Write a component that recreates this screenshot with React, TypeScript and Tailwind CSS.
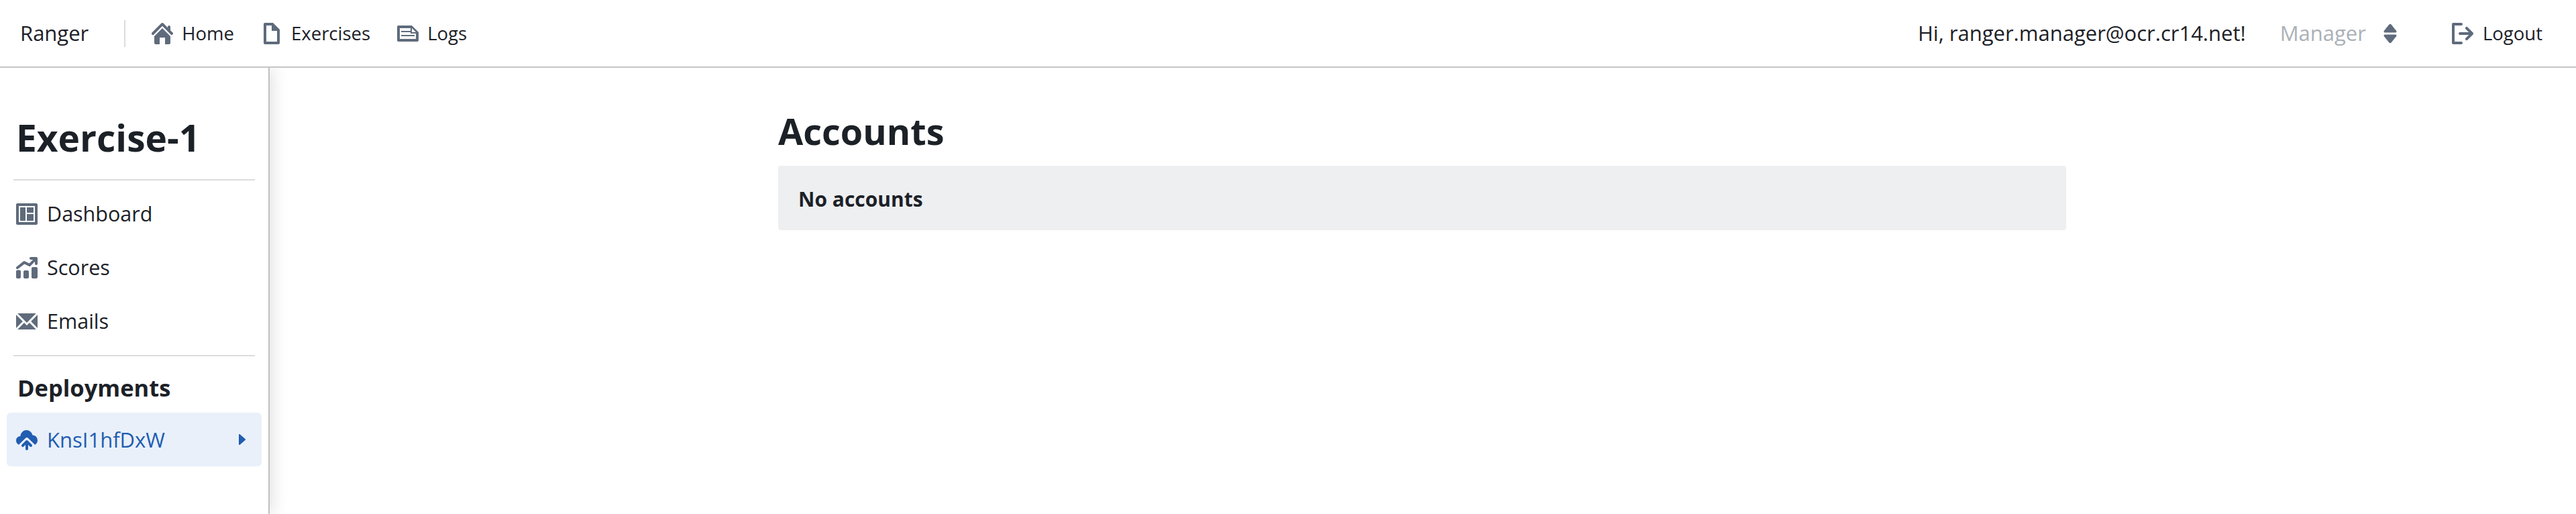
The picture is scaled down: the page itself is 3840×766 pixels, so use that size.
const home = "M2 10v5c0 .55.45 1 1 1h3v-5h4v5h3c.55 0 1-.45 1-1v-5L8 4l-6 6zM15.71 7.29L14 5.59V3c0-.55-.45-1-1-1s-1 .45-1 1v.59L8.71.29C8.53.11 8.28 0 8 0s-.53.11-.71.29l-7 7a1.003 1.003 0 001.42 1.42L8 2.41l6.29 6.29c.18.19.43.3.71.3a1.003 1.003 0 00.71-1.71z";
const doc = "M9 0H3c-.55 0-1 .45-1 1v14c0 .55.45 1 1 1h10c.55 0 1-.45 1-1V5L9 0zm3 14H4V2h4v4h4v8z";
const label = "M11 2H1c-.55 0-1 .45-1 1v10c0 .55.45 1 1 1h14c.55 0 1-.45 1-1V7l-5-5zm3 10H2V4h8v2H3v1h7v1h4v4zm-3-5V4l3 3h-3zM3 9h10v1H3z";
const logout = "M7 14H2V2h5c.55 0 1-.45 1-1s-.45-1-1-1H1C.45 0 0 .45 0 1v14c0 .55.45 1 1 1h6c.55 0 1-.45 1-1s-.45-1-1-1zm8.71-6.71l-4-4a1.003 1.003 0 00-1.42 1.42L12.59 7H6c-.55 0-1 .45-1 1s.45 1 1 1h6.59l-2.29 2.29a1.003 1.003 0 001.42 1.42l4-4c.18-.18.29-.43.29-.71 0-.28-.11-.53-.29-.71z";
const dbl = "M4 7.2h8c.6 0 1-.7.6-1.2L8.8 1.3a1 1 0 00-1.6 0L3.4 6c-.4.5 0 1.2.6 1.2zM12 8.8H4c-.6 0-1 .7-.6 1.2l3.8 4.7a1 1 0 001.6 0l3.8-4.7c.4-.5 0-1.2-.6-1.2z";
const caret = "M11 8c0-.15-.07-.28-.17-.37l-4-3.5A.495.495 0 006 4.5v7a.495.495 0 00.83.37l4-3.5c.1-.09.17-.22.17-.37z";
const envelope = "M0 3.06v9.88L4.94 8 0 3.06zM14.94 2H1.06L8 8.94 14.94 2zm-3.88 6L16 12.94V3.06L11.06 8zM8 11.06l-2-2L1.06 14h13.88L10 9.06l-2 2z";
const cloud = "M8.71 8.79C8.53 8.61 8.28 8.5 8 8.5s-.53.11-.71.29l-3 3a1 1 0 001.42 1.42L7 11.91V15c0 .55.45 1 1 1s1-.45 1-1v-3.09l1.29 1.29c.18.19.43.3.71.3a1 1 0 00.71-1.71l-3-3zM12.3 4.7A4.6 4.6 0 003.2 5.5 3.2 3.2 0 000 8.7c0 1.4.8 2.6 2 3.2L7 7a1.4 1.4 0 012 0l5 4.9c1.2-.6 2-1.8 2-3.2 0-2.2-1.6-4-3.7-4z";
const control = "M1 0h14c.55 0 1 .45 1 1v14c0 .55-.45 1-1 1H1c-.55 0-1-.45-1-1V1c0-.55.45-1 1-1zm1 2v12h12V2H2zm1 1h4v10H3V3zm5 0h5v4H8V3zm0 5h5v5H8V8z";
const chart = "M1 9.7h1.5c.55 0 1 .45 1 1V15c0 .55-.45 1-1 1H1c-.55 0-1-.45-1-1v-4.3c0-.55.45-1 1-1zm5.5.3H8.5c.55 0 1 .45 1 1v4c0 .55-.45 1-1 1H6.5c-.55 0-1-.45-1-1v-4c0-.55.45-1 1-1zM12.5 7.5H15c.55 0 1 .45 1 1V15c0 .55-.45 1-1 1h-2.5c-.55 0-1-.45-1-1V8.5c0-.55.45-1 1-1zM11 0h4c.55 0 1 .45 1 1v4a1 1 0 01-2 0V3.41L10.71 6.7a1 1 0 01-1.16.19L6.2 5.2l-4.6 3.6A1 1 0 01.4 7.2l5-4a1 1 0 011.05-.1l3.36 1.68L12.59 2H11a1 1 0 010-2z";

function Ic({ d, className }: { d: string; className?: string }) {
  return (
    <svg viewBox="0 0 16 16" fill="currentColor" fillRule="evenodd" className={className ?? "w-8 h-8 text-[#5f6b7c] shrink-0"}>
      <path d={d} />
    </svg>
  );
}

function NavLink({ d, text }: { d: string; text: string }) {
  return (
    <div className="flex items-center gap-[13px]">
      <Ic d={d} />
      <span>{text}</span>
    </div>
  );
}

function SideItem({ d, text }: { d: string; text: string }) {
  return (
    <div className="flex items-center h-20 px-[14px] gap-[14px] text-[30.5px]">
      <Ic d={d} />
      <span>{text}</span>
    </div>
  );
}

export default function App() {
  return (
    <div className="h-[766px] flex flex-col bg-white text-[#1c2127] overflow-hidden font-['Open_Sans',sans-serif]">
      <header className="h-[101px] shrink-0 flex items-center justify-between pl-[30px] pr-[50px] text-[27.5px] bg-white border-b-2 border-[#c5c5c5] relative z-10">
        <div className="flex items-center">
          <span className="text-[31px]">Ranger</span>
          <div className="w-[2px] h-10 bg-[#dcdcdc] ml-[53px] mr-[39px]" />
          <div className="flex items-center gap-[40px]">
            <NavLink d={home} text="Home" />
            <NavLink d={doc} text="Exercises" />
            <NavLink d={label} text="Logs" />
          </div>
        </div>
        <div className="flex items-center">
          <span className="text-[31px]">Hi, ranger.manager@ocr.cr14.net!</span>
          <div className="flex items-center ml-[51px] text-[31px] text-[#abb0b8] gap-[20px]">
            <span>Manager</span>
            <Ic d={dbl} />
          </div>
          <div className="flex items-center gap-[14px] ml-[76px]">
            <Ic d={logout} />
            <span>Logout</span>
          </div>
        </div>
      </header>
      <div className="flex flex-1 min-h-0">
        <aside className="w-[402px] shrink-0 px-[10px] pt-[66px] border-r-2 border-[#c0c0c0] shadow-[4px_0_24px_rgba(0,0,0,0.12)]">
          <h1 className="text-[55px] font-bold leading-[76px] px-[14px]">Exercise-1</h1>
          <div className="h-[2px] bg-[#dcdcdc] mx-[10px] mt-[24px] mb-[10px]" />
          <SideItem d={control} text="Dashboard" />
          <SideItem d={chart} text="Scores" />
          <SideItem d={envelope} text="Emails" />
          <div className="h-[2px] bg-[#dcdcdc] mx-[10px] mt-[10px]" />
          <h2 className="text-[34.5px] font-bold leading-[50px] px-4 mt-[22px] mb-[12px]">Deployments</h2>
          <div className="flex items-center h-20 px-[14px] gap-[14px] text-[31px] bg-[#e9f0fa] text-[#215db0] rounded-[6px]">
            <Ic d={cloud} className="w-8 h-8 shrink-0" />
            <span className="flex-1">KnsI1hfDxW</span>
            <Ic d={caret} className="w-8 h-8 shrink-0" />
          </div>
        </aside>
        <main className="flex-1 pl-[758px] pt-[54px]">
          <div className="w-[1920px]">
            <h1 className="text-[54px] font-bold leading-[80px]">Accounts</h1>
            <div className="mt-[12px] h-[96px] flex items-center px-[30px] bg-[#eeeff1] rounded-[4px] text-[30px] font-bold pt-[2px]">No accounts</div>
          </div>
        </main>
      </div>
    </div>
  );
}
